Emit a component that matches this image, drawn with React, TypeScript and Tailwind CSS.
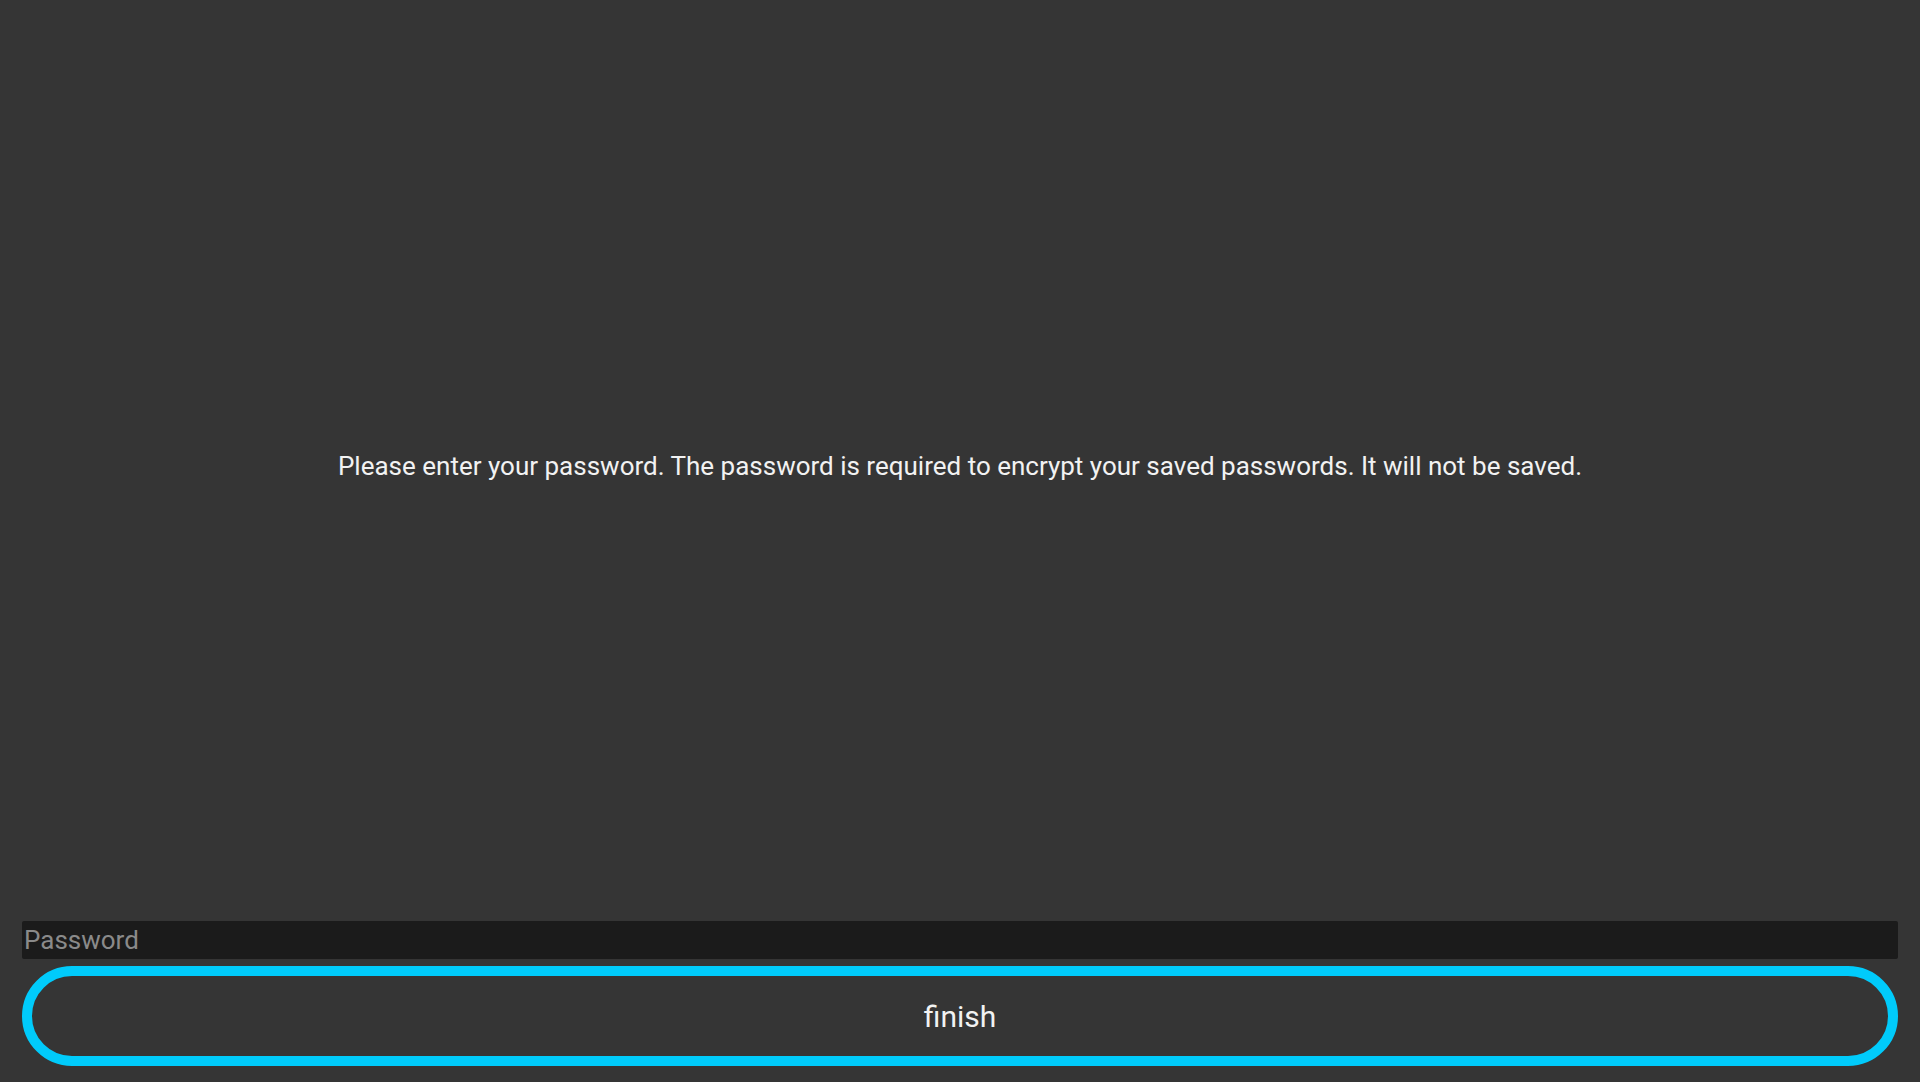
export default function App() {
  return (
    <div className="h-[1082px] w-full bg-[#353535] flex flex-col font-['Roboto',sans-serif] overflow-hidden">
      {/* Message */}
      <div className="flex-1 flex items-center justify-center pt-[10px]">
        <p className="text-[26px] text-[#f2f2f2] leading-none">
          Please enter your password. The password is required to encrypt your saved passwords. It will not be saved.
        </p>
      </div>

      {/* Form */}
      <div className="px-[22px] pb-[16px] flex flex-col gap-[7px]">
        <input
          type="password"
          placeholder="Password"
          className="h-[38px] w-full rounded-[2px] bg-[#1b1b1b] px-[2px] text-[26px] text-white placeholder:text-[#8a8a8a] outline-none"
        />
        <button className="h-[100px] w-full rounded-full border-[10px] border-[#00cbfb] bg-[#353535] text-[30px] text-[#f2f2f2]">
          finish
        </button>
      </div>
    </div>
  );
}
